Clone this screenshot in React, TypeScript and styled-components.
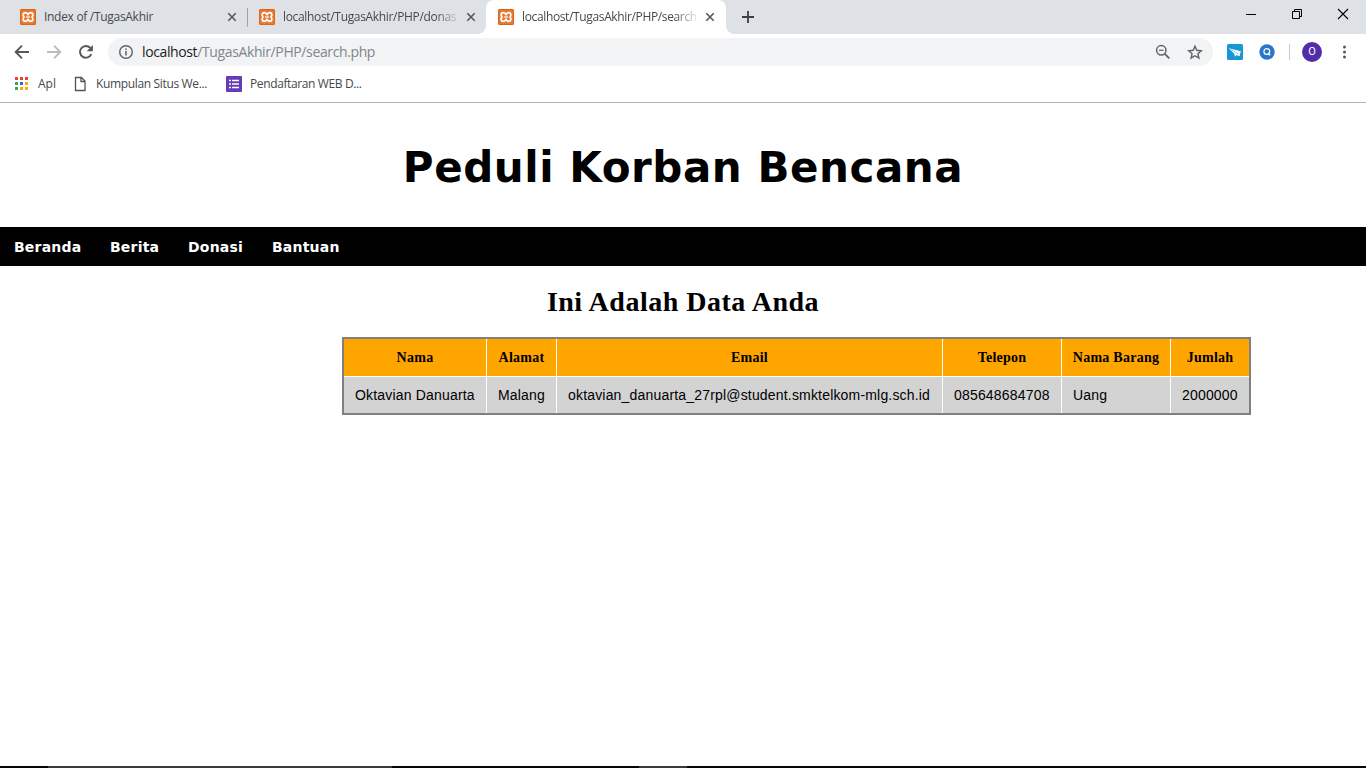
import React from 'react';
import styled, { createGlobalStyle } from 'styled-components';

const GlobalStyle = createGlobalStyle`
  * { box-sizing: border-box; }
  body { margin: 0; background: #fff; overflow: hidden; }
  svg { display: block; flex: none; }
`;

const Window = styled.div`
  display: flex;
  flex-direction: column;
  width: 1366px;
  height: 768px;
  background: #fff;
  font-family: 'Open Sans', 'Noto Sans', sans-serif;
  font-size: 12px;
`;

const TabStrip = styled.header`
  display: flex;
  height: 34px;
  padding-left: 8px;
  background: #dee1e6;
`;

const Tab = styled.div<{ $active?: boolean; $divider?: boolean }>`
  position: relative;
  display: flex;
  align-items: center;
  width: ${p => (p.$active ? 240 : 239)}px;
  padding: 0 10px 0 12px;
  background: ${p => (p.$active ? '#fff' : 'transparent')};
  border-radius: 8px 8px 0 0;
  ${p => p.$divider && `
    &::after {
      content: '';
      position: absolute;
      right: -1px;
      top: 8px;
      width: 1px;
      height: 19px;
      background: #a0a3a8;
    }
  `}
  ${p => p.$active && `
    &::before, &::after {
      content: '';
      position: absolute;
      bottom: 0;
      width: 8px;
      height: 8px;
    }
    &::before { left: -8px; background: radial-gradient(circle at 0 0, transparent 7.5px, #fff 8px); }
    &::after { right: -8px; background: radial-gradient(circle at 100% 0, transparent 7.5px, #fff 8px); }
  `}
`;

const TabTitle = styled.span<{ $fade?: boolean; $spacing: number }>`
  width: 179px;
  margin-left: 8px;
  margin-right: 4px;
  white-space: nowrap;
  line-height: 18px;
  color: #45494d;
  letter-spacing: ${p => p.$spacing}px;
  ${p => p.$fade && 'mask-image: linear-gradient(to right, #000 152px, transparent 178px);'}
`;

const NewTab = styled.div`
  display: flex;
  align-items: center;
  margin-left: 16px;
`;

const WindowControls = styled.div`
  display: flex;
  align-items: flex-start;
  gap: 34px;
  margin-left: auto;
  padding: 8px 17px 0 0;
`;

const Toolbar = styled.div`
  display: flex;
  align-items: center;
  height: 36px;
  padding: 0 13px 0 14px;
`;

const NavIcons = styled.div`
  display: flex;
  align-items: center;
  gap: 16px;
`;

const AddressBar = styled.div`
  display: flex;
  align-items: center;
  width: 1105px;
  height: 28px;
  margin-left: 14px;
  padding: 0 10px;
  border-radius: 14px;
  background: #f1f3f4;
`;

const Url = styled.span`
  flex: 1;
  margin-left: 8px;
  font-size: 14px;
  letter-spacing: -0.38px;
  line-height: 20px;
  color: #80868b;
`;

const Host = styled.span`
  color: #202124;
`;

const AddressActions = styled.div`
  display: flex;
  gap: 16px;
`;

const Extensions = styled.div`
  display: flex;
  align-items: center;
  gap: 16px;
  margin-left: 14px;
`;

const ToolbarDivider = styled.div`
  width: 1px;
  height: 16px;
  margin: 0 12px 0 14px;
  background: #c9cbce;
`;

const Avatar = styled.div`
  width: 20px;
  height: 20px;
  border-radius: 50%;
  background: #512da8;
  color: #fff;
  font: 11px/20px Roboto, sans-serif;
  text-align: center;
  margin-right: 14px;
`;

const BookmarksBar = styled.div`
  display: flex;
  height: 33px;
  padding: 0 0 5px 14px;
  border-bottom: 1px solid #b4b4b4;
`;

const Bookmark = styled.div<{ $width: number; $gap: number; $spacing: number }>`
  display: flex;
  align-items: center;
  gap: ${p => p.$gap}px;
  width: ${p => p.$width}px;
  white-space: nowrap;
  letter-spacing: ${p => p.$spacing}px;
  color: #45494d;
`;

const Page = styled.main`
  flex: 1;
  display: flex;
  flex-direction: column;
`;

const SiteTitle = styled.h1`
  margin: 0;
  height: 124px;
  padding-top: 35px;
  font: bold 42px/60px 'DejaVu Sans', Verdana, sans-serif;
  letter-spacing: 0.55px;
  text-align: center;
  color: #000;
`;

const SiteNav = styled.nav`
  display: flex;
  height: 39px;
  padding-left: 14px;
  background: #000;
`;

const NavLink = styled.a<{ $width: number }>`
  width: ${p => p.$width}px;
  font: bold 14px/41px 'DejaVu Sans', Verdana, sans-serif;
  letter-spacing: 0.2px;
  color: #fff;
`;

const Heading = styled.h2`
  margin: 0;
  height: 71px;
  padding-top: 18px;
  font: bold 28px/36px 'Liberation Serif', serif;
  letter-spacing: 0.5px;
  text-align: center;
  color: #000;
`;

const Table = styled.div`
  display: grid;
  grid-template-columns: 142px 69px 385px 118px 108px 78px;
  grid-template-rows: 37px 36px;
  gap: 1px;
  width: 909px;
  margin-left: 342px;
  border: 2px solid #808080;
  background: #fff;
`;

const HeadCell = styled.div`
  background: #ffa500;
  font: bold 14px/37px 'Liberation Serif', serif;
  letter-spacing: 0.25px;
  text-align: center;
  white-space: nowrap;
  color: #000;
`;

const Cell = styled.div`
  padding-left: 11px;
  background: #d3d3d3;
  font: 14px/36px 'Liberation Sans', sans-serif;
  letter-spacing: 0.18px;
  white-space: nowrap;
  color: #000;
`;

const Taskbar = styled.footer`
  display: grid;
  grid-template-columns: 48px 344px 247px 48px 1fr;
  height: 2px;
`;

const TaskSegment = styled.div<{ $lit?: boolean }>`
  background: ${p => (p.$lit ? '#3b3a3a' : '#080607')};
`;

const XamppIcon = () => (
  <svg width="16" height="16" viewBox="0 0 16 16">
    <rect width="16" height="16" rx="1.500" fill="#e8792f" />
    <rect x=".5" y=".5" width="15" height="15" rx="1.500" fill="none" stroke="#d9661c" />
    <path d="M8 5.700C7.500 4.300 6.700 3.700 5.200 3.700 3 3.700 2.600 6.500 4 8 2.600 9.500 3 12.300 5.200 12.300c1.500 0 2.300-.6 2.800-2 .5 1.400 1.300 2 2.800 2 2.200 0 2.600-2.800 1.200-4.300C13.400 6.500 13 3.700 10.800 3.700 9.300 3.700 8.500 4.300 8 5.700z" fill="none" stroke="#fff" strokeWidth="1.800" strokeLinejoin="round" />
    <path d="M6 8h4" stroke="#fff" strokeWidth="1.200" />
  </svg>
);

const CloseIcon = () => (
  <svg width="10" height="10" viewBox="0 0 10 10">
    <path d="M1.300 1.300l7.400 7.400M8.700 1.300L1.300 8.700" stroke="#53575b" strokeWidth="1.600" />
  </svg>
);

const tabs = [
  { title: 'Index of /TugasAkhir', spacing: -0.3, divider: true },
  { title: 'localhost/TugasAkhir/PHP/donas', spacing: -0.33, fade: true },
  { title: 'localhost/TugasAkhir/PHP/search', spacing: -0.36, fade: true, active: true },
];

const links = [
  { label: 'Beranda', width: 96 },
  { label: 'Berita', width: 78 },
  { label: 'Donasi', width: 84 },
  { label: 'Bantuan', width: 90 },
];

const columns = ['Nama', 'Alamat', 'Email', 'Telepon', 'Nama Barang', 'Jumlah'];
const record = ['Oktavian Danuarta', 'Malang', 'oktavian_danuarta_27rpl@student.smktelkom-mlg.sch.id', '085648684708', 'Uang', '2000000'];

const appColors = ['#ea4335', '#ea4335', '#ea4335', '#34a853', '#1a73e8', '#fbab06', '#34a853', '#fbab06', '#fbab06'];

export default function App() {
  return (
    <Window>
      <GlobalStyle />
      <TabStrip>
        {tabs.map(t => (
          <Tab key={t.title} $active={t.active} $divider={t.divider}>
            <XamppIcon />
            <TabTitle $fade={t.fade} $spacing={t.spacing}>{t.title}</TabTitle>
            <CloseIcon />
          </Tab>
        ))}
        <NewTab>
          <svg width="12" height="12" viewBox="0 0 12 12"><path d="M6 0v12M0 6h12" stroke="#3c4043" strokeWidth="1.800" /></svg>
        </NewTab>
        <WindowControls>
          <svg width="12" height="12" viewBox="0 0 12 12"><path d="M1 6.500h10" stroke="#000" /></svg>
          <svg width="12" height="12" viewBox="0 0 12 12"><path d="M1.500 3.500h7v7h-7zM3.500 3.500v-2h7v7h-2" fill="none" stroke="#000" /></svg>
          <svg width="12" height="12" viewBox="0 0 12 12"><path d="M1 1l10 10M11 1L1 11" stroke="#000" strokeWidth="1.100" /></svg>
        </WindowControls>
      </TabStrip>

      <Toolbar>
        <NavIcons>
          <svg width="16" height="16" viewBox="0 0 16 16"><path d="M15 8H2M8 1.700L1.700 8 8 14.300" fill="none" stroke="#55595d" strokeWidth="1.900" /></svg>
          <svg width="16" height="16" viewBox="0 0 16 16"><path d="M1 8h13M8 1.700L14.300 8 8 14.300" fill="none" stroke="#babcbe" strokeWidth="1.900" /></svg>
          <svg width="16" height="16" viewBox="0 0 16 16">
            <path d="M13.300 10.200A5.900 5.900 0 1 1 12.300 3.900L13.500 5.200" fill="none" stroke="#55595d" strokeWidth="1.900" />
            <path d="M14.900 1v6.200H8.700z" fill="#55595d" />
          </svg>
        </NavIcons>
        <AddressBar>
          <svg width="16" height="16" viewBox="0 0 16 16">
            <circle cx="8" cy="8" r="6.300" fill="none" stroke="#5f6368" strokeWidth="1.400" />
            <path d="M8 7v4.400M8 4.400v1.500" stroke="#5f6368" strokeWidth="1.500" />
          </svg>
          <Url><Host>localhost</Host>/TugasAkhir/PHP/search.php</Url>
          <AddressActions>
            <svg width="16" height="16" viewBox="0 0 16 16">
              <circle cx="6.300" cy="6.300" r="4.700" fill="none" stroke="#5f6368" strokeWidth="1.500" />
              <path d="M9.800 9.800l4.500 4.500" stroke="#5f6368" strokeWidth="1.900" />
              <path d="M4 6.300h4.600" stroke="#5f6368" strokeWidth="1.200" />
            </svg>
            <svg width="16" height="16" viewBox="0 0 16 16">
              <path d="M8 2.200l1.800 4.100 4.500.4-3.400 3 1 4.400L8 11.700l-3.900 2.400 1-4.400-3.400-3 4.500-.4z" fill="none" stroke="#5f6368" strokeWidth="1.400" />
            </svg>
          </AddressActions>
        </AddressBar>
        <Extensions>
          <svg width="16" height="16" viewBox="0 0 16 16">
            <rect width="16" height="16" rx="1.500" fill="#1698d8" />
            <path d="M1.800 4.300L13.800 7.200l-1.300 5-3.200-1.300-1.200 1.800-.9-3z" fill="#fff" />
            <path d="M4 5.500l7.500 4.600" stroke="#1698d8" strokeWidth=".5" />
          </svg>
          <svg width="16" height="16" viewBox="0 0 16 16">
            <circle cx="8" cy="8" r="7.700" fill="#2a76cc" />
            <circle cx="7.800" cy="7.500" r="2.900" fill="none" stroke="#fff" strokeWidth="1.200" />
            <path d="M8.900 8.900l2.200 2.500" stroke="#fff" strokeWidth="1.300" />
          </svg>
        </Extensions>
        <ToolbarDivider />
        <Avatar>O</Avatar>
        <svg width="16" height="16" viewBox="0 0 16 16" fill="#55595d">
          <circle cx="8.500" cy="3" r="1.500" /><circle cx="8.500" cy="8" r="1.500" /><circle cx="8.500" cy="13" r="1.500" />
        </svg>
      </Toolbar>

      <BookmarksBar>
        <Bookmark $width={58} $gap={9} $spacing={0}>
          <svg width="15" height="14" viewBox="0 0 15 14">
            {appColors.map((c, i) => (
              <rect key={i} x={1 + (i % 3) * 5} y={Math.floor(i / 3) * 5} width="3" height="3" fill={c} />
            ))}
          </svg>
          Apl
        </Bookmark>
        <Bookmark $width={154} $gap={8} $spacing={-0.35}>
          <svg width="16" height="16" viewBox="0 0 16 16">
            <path d="M3.500 1.500h6l3.500 3.500v9.500h-9.500zM9 1.500v4h4" fill="none" stroke="#505458" strokeWidth="1.300" />
          </svg>
          Kumpulan Situs We...
        </Bookmark>
        <Bookmark $width={150} $gap={8} $spacing={-0.38}>
          <svg width="16" height="16" viewBox="0 0 16 16">
            <rect width="16" height="16" rx="1" fill="#673ab7" />
            <path d="M3 4.500h2M3 8h2M3 11.500h2M6 4.500h7M6 8h7M6 11.500h7" stroke="#fff" strokeWidth="1.700" />
          </svg>
          Pendaftaran WEB D...
        </Bookmark>
      </BookmarksBar>

      <Page>
        <SiteTitle>Peduli Korban Bencana</SiteTitle>
        <SiteNav>
          {links.map(l => <NavLink key={l.label} $width={l.width}>{l.label}</NavLink>)}
        </SiteNav>
        <Heading>Ini Adalah Data Anda</Heading>
        <Table>
          {columns.map(c => <HeadCell key={c}>{c}</HeadCell>)}
          {record.map(v => <Cell key={v}>{v}</Cell>)}
        </Table>
      </Page>

      <Taskbar>
        <TaskSegment />
        <TaskSegment $lit />
        <TaskSegment />
        <TaskSegment $lit />
        <TaskSegment />
      </Taskbar>
    </Window>
  );
}
